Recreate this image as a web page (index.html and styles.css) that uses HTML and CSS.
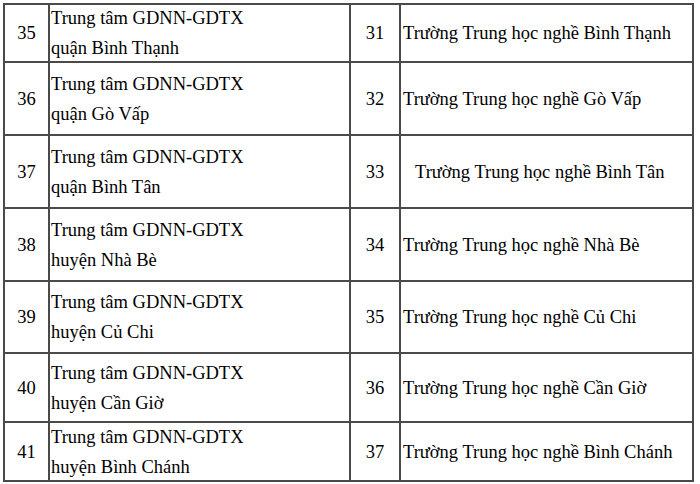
FILE: index.html
```html
<!DOCTYPE html>
<html lang="vi">
<head>
<meta charset="utf-8">
<title>Danh sách</title>
<link rel="stylesheet" href="styles.css">
</head>
<body>
<div class="grid">
  <div class="c num">35</div><div class="c name">Trung tâm GDNN-GDTX<br>quận Bình Thạnh</div><div class="c num">31</div><div class="c school">Trường Trung học nghề Bình Thạnh</div>
  <div class="c num">36</div><div class="c name">Trung tâm GDNN-GDTX<br>quận Gò Vấp</div><div class="c num">32</div><div class="c school">Trường Trung học nghề Gò Vấp</div>
  <div class="c num">37</div><div class="c name">Trung tâm GDNN-GDTX<br>quận Bình Tân</div><div class="c num">33</div><div class="c school indent">Trường Trung học nghề Bình Tân</div>
  <div class="c num">38</div><div class="c name">Trung tâm GDNN-GDTX<br>huyện Nhà Bè</div><div class="c num">34</div><div class="c school">Trường Trung học nghề Nhà Bè</div>
  <div class="c num">39</div><div class="c name">Trung tâm GDNN-GDTX<br>huyện Củ Chi</div><div class="c num">35</div><div class="c school">Trường Trung học nghề Củ Chi</div>
  <div class="c num">40</div><div class="c name">Trung tâm GDNN-GDTX<br>huyện Cần Giờ</div><div class="c num">36</div><div class="c school">Trường Trung học nghề Cần Giờ</div>
  <div class="c num">41</div><div class="c name">Trung tâm GDNN-GDTX<br>huyện Bình Chánh</div><div class="c num">37</div><div class="c school">Trường Trung học nghề Bình Chánh</div>
</div>
</body>
</html>
```
FILE: styles.css
```css
* { box-sizing: border-box; }
html, body { margin: 0; padding: 0; background: #fff; }
body {
  font-family: "Liberation Serif", "Times New Roman", serif;
  font-size: 18.5px;
  color: #000;
}
.grid {
  display: grid;
  margin: 3px 0 0 3px;
  width: 691px;
  grid-template-columns: 45px 301px 50px 293px;
  grid-template-rows: 58px 73px 73px 73px 72px 69px 59px;
  border-left: 2px solid #4a4a4a;
  border-top: 2px solid #4a4a4a;
}
.c {
  border-right: 2px solid #4a4a4a;
  border-bottom: 2px solid #4a4a4a;
  display: flex;
  align-items: center;
  line-height: 30px;
}
.num { justify-content: center; }
.name { padding-left: 1px; }
.school { padding-left: 2px; }
.school.indent { padding-left: 14px; }
```
